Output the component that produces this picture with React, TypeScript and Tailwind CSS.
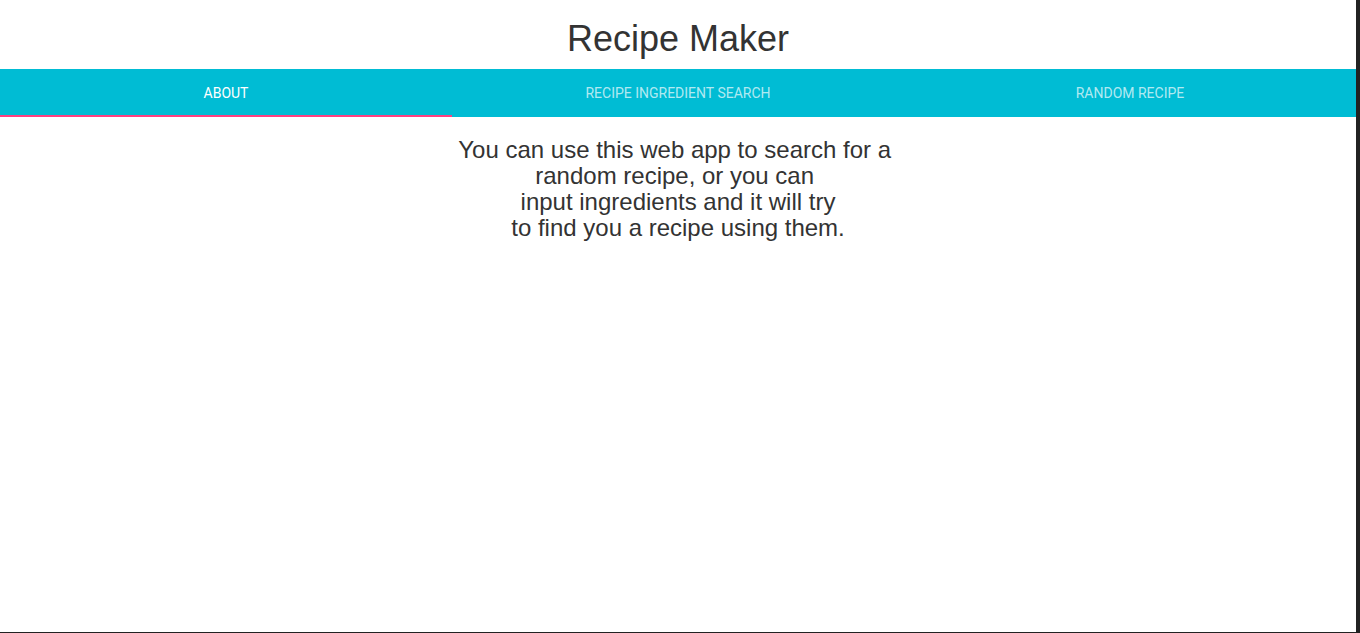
import React from "react";

export default function App() {
  const tabs = ["About", "Recipe Ingredient Search", "Random Recipe"];
  return (
    <div className="w-[1360px] h-[633px] bg-[#222] flex items-start">
      <div className="w-[1356px] h-[632px] bg-white flex flex-col" style={{ fontFamily: '"Liberation Sans", Arial, sans-serif' }}>
        <div className="h-[69px] flex items-center justify-center">
          <h1 className="text-[36px] leading-[41px] text-[#333] pt-[8px]">Recipe Maker</h1>
        </div>
        <div className="h-[48px] bg-[#00bcd4] flex relative">
          {tabs.map((t, i) => (
            <div
              key={t}
              className={
                "flex-1 flex items-center justify-center uppercase text-[14px] " +
                (i === 0 ? "text-white" : "text-white/70")
              }
              style={{ fontFamily: 'Roboto, sans-serif' }}
            >
              {t}
            </div>
          ))}
          <div className="absolute left-0 bottom-0 h-[2px] w-[452px] bg-[#ff4081]" />
        </div>
        <div className="pt-[20px] text-center text-[24px] leading-[26px] text-[#333]">
          You can use this web app to search for a{"\u00a0"}<br />
          random recipe, or you can{"\u00a0"}<br />
          input ingredients and it will try<br />
          to find you a recipe using them.
        </div>
      </div>
    </div>
  );
}
